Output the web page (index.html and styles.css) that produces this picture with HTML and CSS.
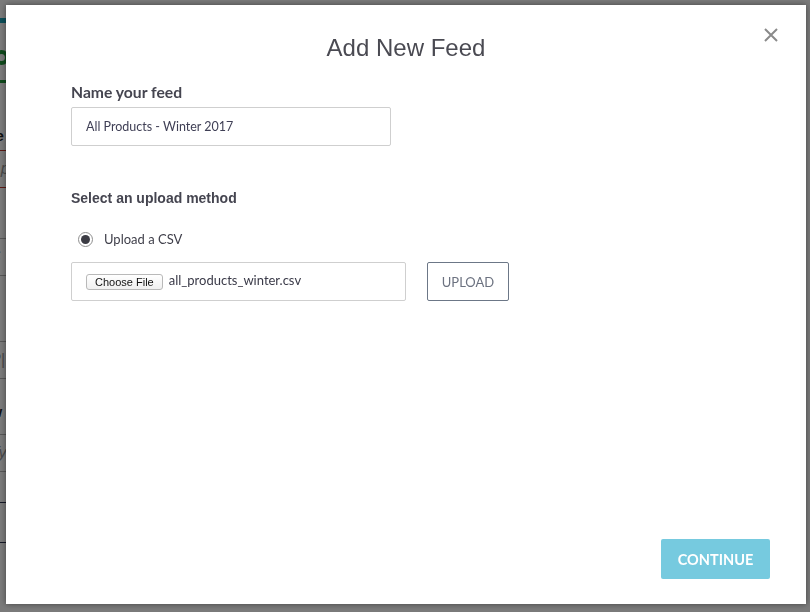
FILE: index.html
```html
<!DOCTYPE html>
<html>
<head>
<meta charset="utf-8">
<link rel="stylesheet" href="styles.css">
</head>
<body>
<div class="page">
  <div class="topbar"></div>
  <div class="brand"><span class="brand-icon"></span></div>
  <div class="greenline"></div>
  <div class="field f1"><div class="flabel">Fee</div><div class="finput err">Ap</div></div>
  <div class="field f2"><div class="flabel">Ms</div><div class="finput">S</div></div>
  <div class="field f3"><div class="flabel">Mo</div><div class="finput">P|</div></div>
  <div class="field f4"><div class="flabel">Mw</div><div class="finput">Ty</div></div>
  <div class="darkline first"></div>
  <div class="darkline second"></div>
</div>

<div class="overlay">
  <div class="modal">
    <button class="close" aria-label="Close">
      <svg width="14" height="14" viewBox="0 0 14 14"><path d="M1 1 L13 13 M13 1 L1 13" stroke="#8a8a8a" stroke-width="2" fill="none"/></svg>
    </button>
    <h1 class="title">Add New Feed</h1>
    <div class="form">
      <div class="group">
        <label class="label">Name your feed</label>
        <div class="text-input">All Products - Winter 2017</div>
      </div>
      <div class="group method">
        <div class="label label-alt">Select an upload method</div>
        <div class="radio-row">
          <span class="radio"><span class="dot"></span></span>
          <span class="radio-text">Upload a CSV</span>
        </div>
        <div class="file-row">
          <div class="file-box">
            <span class="choose">Choose File</span>
            <span class="file-name">all_products_winter.csv</span>
          </div>
          <div class="upload">UPLOAD</div>
        </div>
      </div>
    </div>
    <div class="footer">
      <div class="continue">CONTINUE</div>
    </div>
  </div>
</div>
</body>
</html>
```
FILE: styles.css
```css
html, body {
  margin: 0;
  padding: 0;
  width: 810px;
  height: 612px;
  overflow: hidden;
  background: #ffffff;
  font-family: "Liberation Sans", Arial, sans-serif;
}

/* underlying page, mostly hidden behind the modal */
.page {
  width: 780px;
  height: 612px;
  display: flex;
  flex-direction: column;
}

.topbar {
  margin-top: 18px;
  height: 5px;
  background: #1aa3b8;
}

.brand {
  margin-top: 27px;
  height: 15px;
  display: flex;
  align-items: center;
}

.brand-icon {
  width: 15px;
  height: 15px;
  box-sizing: border-box;
  margin-left: -6px;
  border: 4px solid #1f9a3a;
  border-radius: 50%;
}

.greenline {
  height: 3px;
  margin-top: 15px;
  background: #1f9a3a;
}

.field {
  display: flex;
  flex-direction: column;
}

.f1 { margin-top: 43px; }
.f1 .finput { margin-top: 4px; }
.f2 { margin-top: 24px; }
.f2 .finput { margin-top: 6px; }
.f3 { margin-top: 36px; }
.f3 .finput { margin-top: 9px; }
.f4 { margin-top: 23px; }
.f4 .finput { margin-top: 12px; }

.flabel {
  font-weight: bold;
  font-size: 15px;
  line-height: 20px;
  height: 20px;
  color: #222;
  margin-left: -22px;
}

.finput {
  height: 38px;
  box-sizing: border-box;
  border-top: 1px solid #b5b5b5;
  border-bottom: 1px solid #b5b5b5;
  font-size: 16px;
  line-height: 36px;
  color: #999;
  margin-left: -10px;
  font-style: italic;
}

.finput.err {
  border-color: #c0392b;
}

.darkline {
  height: 1px;
  background: #2c3350;
}

.darkline.first { margin-top: 30px; }
.darkline.second { margin-top: 39px; }

/* modal */
.overlay {
  position: fixed;
  inset: 0;
  background: rgba(0, 0, 0, 0.52);
  padding: 5px 0 0 6px;
  box-sizing: border-box;
}

.modal {
  position: relative;
  width: 800px;
  height: 599px;
  background: #ffffff;
  box-shadow: 0 0 6px rgba(0, 0, 0, 0.45);
  box-sizing: border-box;
  padding: 29px 65px 0 65px;
  display: flex;
  flex-direction: column;
}

.close {
  position: absolute;
  top: 23px;
  right: 28px;
  width: 14px;
  height: 14px;
  padding: 0;
  border: 0;
  background: none;
  display: flex;
}

.title {
  margin: 0;
  text-align: center;
  font-weight: normal;
  font-size: 24px;
  line-height: 28px;
  color: #4a4a52;
  font-family: "Liberation Sans", Arial, sans-serif;
}

.form {
  display: flex;
  flex-direction: column;
  flex: 1;
}

.group {
  display: flex;
  flex-direction: column;
  margin-top: 20px;
}

.label {
  font-family: Lato, "Liberation Sans", sans-serif;
  font-weight: bold;
  font-size: 15.7px;
  line-height: 20px;
  color: #454550;
}

.label-alt {
  font-family: "Liberation Sans", Arial, sans-serif;
  font-size: 14px;
}

.text-input {
  margin-top: 5px;
  width: 320px;
  height: 39px;
  box-sizing: border-box;
  border: 1px solid #cfcfcf;
  border-radius: 2px;
  padding-left: 14px;
  font-family: Lato, sans-serif;
  font-size: 12.5px;
  line-height: 37px;
  color: #3f3f55;
}

.method {
  margin-top: 42px;
}

.radio-row {
  margin-top: 21px;
  display: flex;
  align-items: center;
  padding-left: 7px;
  height: 20px;
}

.radio {
  width: 15px;
  height: 15px;
  box-sizing: border-box;
  border: 1px solid #8f8f8f;
  border-radius: 50%;
  display: flex;
  align-items: center;
  justify-content: center;
  background: #fff;
}

.dot {
  width: 9px;
  height: 9px;
  border-radius: 50%;
  background: #3c3c44;
}

.radio-text {
  margin-left: 11px;
  font-family: Lato, sans-serif;
  font-size: 13px;
  color: #3f3f4a;
}

.file-row {
  margin-top: 13px;
  display: flex;
  gap: 21px;
}

.file-box {
  width: 335px;
  height: 39px;
  box-sizing: border-box;
  border: 1px solid #cfcfcf;
  border-radius: 2px;
  display: flex;
  align-items: center;
  padding-left: 14px;
}

.choose {
  height: 16px;
  box-sizing: border-box;
  padding: 0 8px;
  border: 1px solid #b9b9b9;
  border-radius: 3px;
  background: linear-gradient(#ffffff, #f0f0f0);
  font-family: "Liberation Sans", Arial, sans-serif;
  font-size: 11px;
  line-height: 14px;
  color: #111;
}

.file-name {
  margin-left: 6px;
  font-family: Lato, sans-serif;
  font-size: 13px;
  color: #3a3a48;
  position: relative;
  top: -2px;
}

.upload {
  width: 82px;
  height: 39px;
  box-sizing: border-box;
  border: 1px solid #6c7787;
  border-radius: 2px;
  display: flex;
  align-items: center;
  justify-content: center;
  font-family: Lato, sans-serif;
  font-size: 13px;
  color: #6c7280;
}

.footer {
  display: flex;
  justify-content: flex-end;
  padding-bottom: 25px;
  margin-right: -29px;
}

.continue {
  width: 109px;
  height: 40px;
  border-radius: 2px;
  background: #76cadf;
  color: #ffffff;
  font-family: Lato, sans-serif;
  font-weight: bold;
  font-size: 14.5px;
  display: flex;
  align-items: center;
  justify-content: center;
}
```
